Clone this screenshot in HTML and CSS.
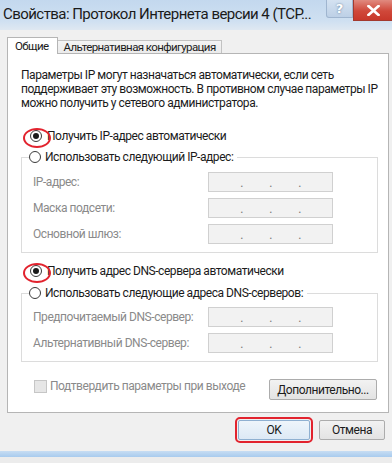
FILE: index.html
```html
<!DOCTYPE html>
<html lang="ru">
<head>
    <meta charset="UTF-8">
    <title>Свойства: Протокол Интернета версии 4 (TCP/IPv4)</title>
    <link rel="stylesheet" href="styles.css">
</head>
<body>
    <div class="window">
        <div class="titlebar">
            <span class="title">Свойства: Протокол Интернета версии 4 (TCP...</span>
            <div class="caption-buttons">
                <span class="cap-btn help">?</span>
                <span class="cap-btn close">
                    <svg width="13" height="11" viewBox="0 0 13 11">
                        <path d="M1.5 1 L11.5 10 M11.5 1 L1.5 10" stroke="#fff" stroke-width="2.6" stroke-linecap="square"/>
                    </svg>
                </span>
            </div>
        </div>

        <div class="client">
            <div class="tabs">
                <div class="tab active">Общие</div>
                <div class="tab">Альтернативная конфигурация</div>
            </div>

            <div class="panel">
                <p class="intro">Параметры IP могут назначаться автоматически, если сеть<br>поддерживает эту возможность. В противном случае параметры IP<br>можно получить у сетевого администратора.</p>

                <div class="option marked">
                    <span class="radio checked"></span>
                    <span>Получить IP-адрес автоматически</span>
                </div>

                <fieldset class="group">
                    <legend class="option">
                        <span class="radio"></span>
                        <span>Использовать следующий IP-адрес:</span>
                    </legend>
                    <div class="field">
                        <span class="field-label">IP-адрес:</span>
                        <span class="ip-box"><i>.</i><i>.</i><i>.</i></span>
                    </div>
                    <div class="field">
                        <span class="field-label">Маска подсети:</span>
                        <span class="ip-box"><i>.</i><i>.</i><i>.</i></span>
                    </div>
                    <div class="field">
                        <span class="field-label">Основной шлюз:</span>
                        <span class="ip-box"><i>.</i><i>.</i><i>.</i></span>
                    </div>
                </fieldset>

                <div class="option marked dns-auto">
                    <span class="radio checked"></span>
                    <span>Получить адрес DNS-сервера автоматически</span>
                </div>

                <fieldset class="group dns-group">
                    <legend class="option">
                        <span class="radio"></span>
                        <span>Использовать следующие адреса DNS-серверов:</span>
                    </legend>
                    <div class="field">
                        <span class="field-label">Предпочитаемый DNS-сервер:</span>
                        <span class="ip-box"><i>.</i><i>.</i><i>.</i></span>
                    </div>
                    <div class="field">
                        <span class="field-label">Альтернативный DNS-сервер:</span>
                        <span class="ip-box"><i>.</i><i>.</i><i>.</i></span>
                    </div>
                </fieldset>

                <div class="panel-footer">
                    <div class="check">
                        <span class="checkbox"></span>
                        <span>Подтвердить параметры при выходе</span>
                    </div>
                    <span class="button advanced">Дополнительно...</span>
                </div>
            </div>

            <div class="dialog-buttons">
                <span class="button default">OK</span>
                <span class="button cancel">Отмена</span>
            </div>
        </div>

        <div class="frame-bottom"></div>
    </div>
</body>
</html>
```

FILE: styles.css
```css
* {
    margin: 0;
    padding: 0;
    box-sizing: border-box;
}

body {
    width: 392px;
    height: 463px;
    overflow: hidden;
    background: #ececec;
    font-family: Roboto, 'Liberation Sans', sans-serif;
    font-size: 12px;
    letter-spacing: -0.45px;
    color: #1b1b1b;
}

.window {
    display: flex;
    flex-direction: column;
    height: 100%;
}

/* caption */

.titlebar {
    height: 30px;
    display: flex;
    justify-content: space-between;
    align-items: flex-start;
    background: linear-gradient(#c3d8ee, #cfe0f1 70%, #dfe8f1);
}

.title {
    flex: 1;
    min-width: 0;
    padding-left: 3px;
    font-size: 15px;
    letter-spacing: -0.55px;
    line-height: 29px;
    color: #1a1a1a;
    white-space: nowrap;
}

.caption-buttons {
    display: flex;
    align-items: flex-start;
    flex-shrink: 0;
}

.cap-btn {
    display: flex;
    align-items: center;
    justify-content: center;
}

.help {
    width: 27px;
    height: 18px;
    background: linear-gradient(#d4e2f1, #bdd0e6);
    border: 1px solid #9fb5cf;
    border-top: none;
    border-radius: 0 0 0 3px;
    font-family: 'DejaVu Sans', sans-serif;
    font-weight: bold;
    font-size: 13px;
    letter-spacing: 0;
    color: #fff;
    text-shadow: 0 0 2px #54708f;
}

.close {
    width: 39px;
    height: 21px;
    background: linear-gradient(#e08a7f, #d0483a 55%, #c8382b);
    border: 1px solid #a33a2f;
    border-top: none;
    border-right: none;
}

/* client area */

.client {
    flex: 1;
    background: #f0f0f0;
    padding: 7px 3px 0 7px;
}

.tabs {
    display: flex;
    align-items: flex-end;
    height: 16px;
    position: relative;
    z-index: 1;
}

.tab {
    height: 13px;
    padding: 0 5px;
    border: 1px solid #c2c2c2;
    border-bottom: none;
    background: linear-gradient(#f4f4f4, #ebebeb);
    font-size: 11.5px;
    letter-spacing: -0.6px;
    line-height: 12px;
    white-space: nowrap;
}

.tab.active {
    height: 17px;
    margin-bottom: -1px;
    padding: 0 9px 0 7px;
    background: #fff;
    border-color: #b5b5b5;
    line-height: 16px;
}

.tab + .tab {
    border-left: none;
}

.panel {
    width: 382px;
    height: 360px;
    background: #fff;
    border: 1px solid #b5b5b5;
    padding: 14px 10px 0 13px;
}

.intro {
    line-height: 14px;
    white-space: nowrap;
}

.option {
    display: flex;
    align-items: center;
    gap: 5px;
    height: 16px;
    padding-left: 9px;
    white-space: nowrap;
}

.panel > .option {
    margin-top: 18px;
}

.panel > .dns-auto {
    margin-top: 10px;
}

.radio {
    width: 12px;
    height: 12px;
    border: 1px solid #3a3a3a;
    border-radius: 50%;
    background: #fff;
    flex-shrink: 0;
    position: relative;
}

.radio.checked::after {
    content: '';
    position: absolute;
    left: 2px;
    top: 2px;
    width: 6px;
    height: 6px;
    border-radius: 50%;
    background: #1a1a1a;
}

/* red marks drawn over the screenshot */
.marked .radio::before {
    content: '';
    position: absolute;
    left: -8px;
    top: -3px;
    width: 24px;
    height: 16px;
    border: 2px solid #e2232e;
    border-radius: 50%;
}

.group {
    margin-top: 5px;
    border: 1px solid #dcdcdc;
    padding: 0 0 8px 0;
    min-width: 0;
}

.group legend {
    margin-left: 7px;
    padding: 0 4px 0 0;
    gap: 4px;
}

.dns-group {
    margin-top: 6px;
}

.field {
    display: flex;
    justify-content: space-between;
    align-items: center;
    margin: 7px 44px 0 11px;
    white-space: nowrap;
}

.field + .field {
    margin-top: 6px;
}

.dns-group .field:first-of-type {
    margin-top: 6px;
}

.field-label {
    color: #8a8a8a;
}

.ip-box {
    display: flex;
    justify-content: space-around;
    align-items: flex-end;
    width: 125px;
    height: 20px;
    padding: 0 18px 3px 18px;
    background: #f2f2f2;
    border: 1px solid #d0d0d0;
}

.ip-box i {
    font-style: normal;
    color: #777;
    line-height: 10px;
}

.panel-footer {
    display: flex;
    justify-content: space-between;
    align-items: flex-start;
    margin-top: 17px;
}

.check {
    display: flex;
    align-items: center;
    gap: 3px;
    padding-left: 13px;
    color: #8a8a8a;
    height: 12px;
    margin-top: 1px;
    white-space: nowrap;
}

.checkbox {
    width: 13px;
    height: 13px;
    border: 1px solid #c6c6c6;
    background: #e6e6e6;
}

/* buttons */

.button {
    display: flex;
    align-items: center;
    justify-content: center;
    height: 21px;
    border: 1px solid #acacac;
    border-radius: 2px;
    background: linear-gradient(#f2f2f2, #e3e3e3);
    color: #1b1b1b;
    white-space: nowrap;
}

.advanced {
    width: 108px;
    margin-right: 1px;
}

.dialog-buttons {
    display: flex;
    justify-content: flex-end;
    align-items: center;
    gap: 9px;
    height: 32px;
    padding-right: 4px;
    padding-top: 2px;
}

.default {
    width: 72px;
    height: 20px;
    background: linear-gradient(#eef5fb, #dde9f5);
    border-color: #8fb0d1;
    outline: 2px solid #e2232e;
    outline-offset: 1px;
}

.cancel {
    width: 66px;
    height: 20px;
}

.frame-bottom {
    height: 6px;
    margin-bottom: 6px;
    background: linear-gradient(#c7ddf3, #a8cbee);
}
```
